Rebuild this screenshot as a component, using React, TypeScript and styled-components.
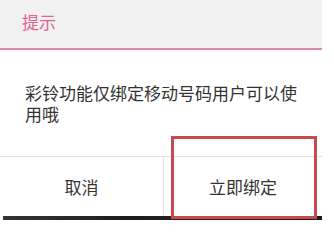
import styled, { createGlobalStyle } from 'styled-components';

const GlobalStyle = createGlobalStyle`
  html, body {
    margin: 0;
    padding: 0;
    background: #ffffff;
  }
  body {
    font-family: "Noto Sans CJK SC", "Liberation Sans", sans-serif;
  }
`;

export default function App() {
  return (
    <>
      <GlobalStyle />
      <Screen>
        <Dialog>
          <Header>
            <Title>提示</Title>
          </Header>
          <Body>
            <Message>彩铃功能仅绑定移动号码用户可以使用哦</Message>
          </Body>
          <Actions>
            <ActionButton>取消</ActionButton>
            <ActionButton $divider>立即绑定</ActionButton>
          </Actions>
          <Backdrop />
        </Dialog>
        <Highlight />
      </Screen>
    </>
  );
}

const Screen = styled.div`
  position: relative;
  width: 334px;
  height: 227px;
  overflow: hidden;
  background: #ffffff;
`;

const Dialog = styled.div`
  width: 322px;
  display: flex;
  flex-direction: column;
  background: #ffffff;
`;

const Header = styled.div`
  height: 50px;
  box-sizing: border-box;
  padding: 11px 0 0 22px;
  background: #f1f1f1;
  border-bottom: 2px solid #dc8aa2;
`;

const Title = styled.div`
  font-size: 17px;
  line-height: 22px;
  color: #e2648e;
`;

const Body = styled.div`
  height: 107px;
  box-sizing: border-box;
  padding: 32px 20px 0 25px;
  border-bottom: 1px solid #e2e2e2;
`;

const Message = styled.div`
  font-size: 17px;
  line-height: 21px;
  color: #333333;
`;

const Actions = styled.div`
  display: grid;
  grid-template-columns: 163px 1fr;
  height: 59px;
`;

const ActionButton = styled.div<{ $divider?: boolean }>`
  display: flex;
  align-items: center;
  justify-content: center;
  font-size: 17px;
  color: #333333;
  border-left: ${({ $divider }) => ($divider ? '1px solid #e6e6e6' : 'none')};
  padding-bottom: 0;
`;

const Backdrop = styled.div`
  height: 4px;
  margin-left: 3px;
  background: linear-gradient(90deg, #3a3330, #1e1c1c 40%, #2b2624 70%, #1a1a1a);
`;

const Highlight = styled.div`
  position: absolute;
  left: 171px;
  top: 136px;
  width: 146px;
  height: 83px;
  box-sizing: border-box;
  border: 3px solid #c9474d;
`;
